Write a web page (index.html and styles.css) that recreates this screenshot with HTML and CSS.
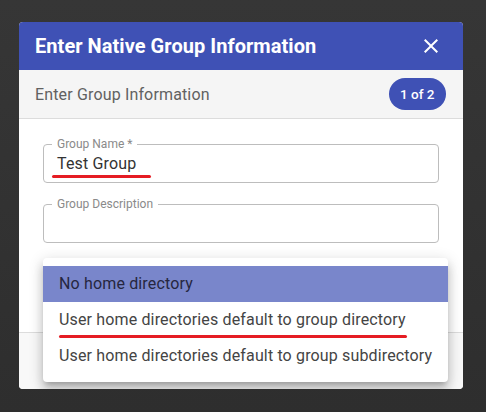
FILE: index.html
```html
<!DOCTYPE html>
<html>
<head>
<meta charset="utf-8">
<link rel="stylesheet" href="styles.css">
</head>
<body>
<div class="dialog">
  <div class="header">
    <div class="title">Enter Native Group Information</div>
    <svg class="close" width="24" height="24" viewBox="0 0 24 24"><path d="M19 6.41L17.59 5 12 10.59 6.41 5 5 6.41 10.59 12 5 17.59 6.41 19 12 13.41 17.59 19 19 17.59 13.41 12z" fill="#fff"/></svg>
  </div>
  <div class="subheader">
    <div class="subtitle">Enter Group Information</div>
    <div class="badge">1 of 2</div>
  </div>
  <div class="content">
    <fieldset class="field">
      <legend class="label">Group Name *</legend>
      <div class="value"><span class="marked">Test Group</span></div>
    </fieldset>
    <fieldset class="field">
      <legend class="label">Group Description</legend>
      <div class="value"></div>
    </fieldset>
  </div>
  <div class="footer"></div>
  <div class="menu">
    <div class="item active"><span>No home directory</span></div>
    <div class="item"><span class="marked2">User home directories default to group directory</span></div>
    <div class="item"><span>User home directories default to group subdirectory</span></div>
  </div>
</div>
</body>
</html>
```
FILE: styles.css
```css
html, body {
  margin: 0;
  height: 100%;
}
body {
  background: linear-gradient(180deg, #363636 0%, #2e2e2e 100%);
  font-family: Roboto, "Noto Sans", sans-serif;
  padding: 22px 0 0 19px;
  box-sizing: border-box;
}
.dialog {
  position: relative;
  width: 444px;
  height: 367px;
  background: #fff;
  border-radius: 4px;
  overflow: hidden;
  display: flex;
  flex-direction: column;
}
.header {
  height: 48px;
  background: #3f51b5;
  display: flex;
  align-items: center;
  justify-content: space-between;
  padding: 0 20px 0 16px;
  flex-shrink: 0;
}
.title {
  color: #fff;
  font-size: 20px;
  font-weight: 700;
  letter-spacing: 0.05px;
}
.close {
  display: block;
}
.subheader {
  height: 48px;
  background: #f5f5f5;
  border-bottom: 1px solid #dcdcdc;
  display: flex;
  align-items: center;
  justify-content: space-between;
  padding: 0 17px 0 16px;
  flex-shrink: 0;
}
.subtitle {
  color: #616161;
  font-size: 16px;
  letter-spacing: 0.15px;
}
.badge {
  height: 32px;
  line-height: 32px;
  padding: 0 11.5px;
  border-radius: 16px;
  background: #3f51b5;
  color: #fff;
  font-size: 13.5px;
  font-weight: 500;
}
.content {
  flex: 1;
  padding: 18px 24px 0 24px;
  display: flex;
  flex-direction: column;
  gap: 14px;
}
.field {
  margin: 0;
  padding: 0 13px 8px 13px;
  border: 1px solid #bdbdbd;
  border-radius: 4px;
  min-width: 0;
}
.label {
  margin-left: -5px;
  padding: 0 5px;
  font-size: 12px;
  line-height: 14px;
  color: #8a8a8a;
}
.value {
  padding-top: 3px;
  height: 20px;
  line-height: 20px;
  font-size: 16px;
  letter-spacing: 0.15px;
  color: #333;
}
.marked, .marked2 {
  position: relative;
  display: inline-block;
}
.marked::after {
  content: "";
  position: absolute;
  left: -5px;
  right: -15px;
  top: 21px;
  height: 3px;
  border-radius: 2px;
  background: #e51c23;
}
.marked2::after {
  content: "";
  position: absolute;
  left: 0;
  right: -1px;
  top: 25px;
  height: 3px;
  border-radius: 2px;
  background: #e51c23;
}
.footer {
  height: 56px;
  background: #f8f8f8;
  border-top: 1px solid #dcdcdc;
  flex-shrink: 0;
}
.menu {
  position: absolute;
  left: 24px;
  top: 236px;
  width: 405px;
  padding: 8px 0;
  background: #fff;
  border-radius: 4px;
  box-shadow: 0 5px 5px -3px rgba(0,0,0,.2), 0 8px 10px 1px rgba(0,0,0,.14), 0 3px 14px 2px rgba(0,0,0,.12);
}
.item {
  height: 36px;
  display: flex;
  align-items: center;
  padding: 0 16px;
  font-size: 16px;
  line-height: 20px;
  letter-spacing: 0.15px;
  color: #444;
  white-space: nowrap;
}
.item.active {
  background: #7986cb;
  color: #262640;
}
```
